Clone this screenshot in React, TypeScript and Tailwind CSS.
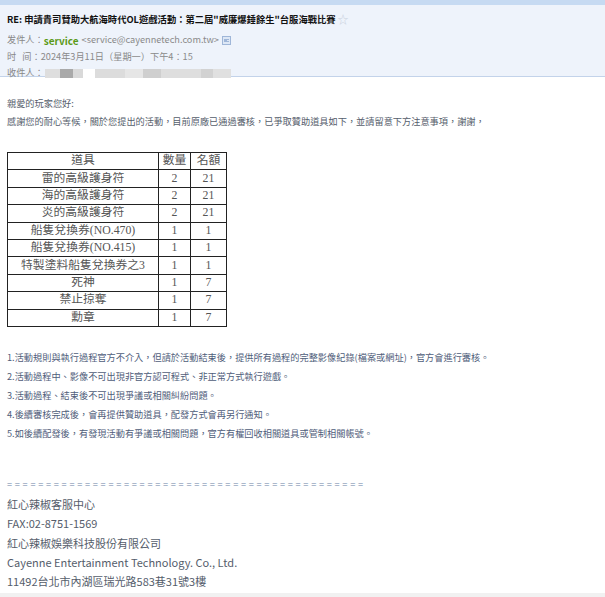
import React from 'react';

const font = { fontFamily: '"Noto Sans CJK TC", "Noto Sans", sans-serif' };

const rows: [string, string, string][] = [
  ['雷的高級護身符', '2', '21'],
  ['海的高級護身符', '2', '21'],
  ['炎的高級護身符', '2', '21'],
  ['船隻兌換券(NO.470)', '1', '1'],
  ['船隻兌換券(NO.415)', '1', '1'],
  ['特製塗料船隻兌換券之3', '1', '1'],
  ['死神', '1', '7'],
  ['禁止掠奪', '1', '7'],
  ['勳章', '1', '7'],
];

const notes = [
  '1.活動規則與執行過程官方不介入，但請於活動結束後，提供所有過程的完整影像紀錄(檔案或網址)，官方會進行審核。',
  '2.活動過程中、影像不可出現非官方認可程式、非正常方式執行遊戲。',
  '3.活動過程、結束後不可出現爭議或相關糾紛問題。',
  '4.後續審核完成後，會再提供贊助道具，配發方式會再另行通知。',
  '5.如後續配發後，有發現活動有爭議或相關問題，官方有權回收相關道具或管制相關帳號。',
];

const signature = [
  '紅心辣椒客服中心',
  'FAX:02-8751-1569',
  '紅心辣椒娛樂科技股份有限公司',
  'Cayenne Entertainment Technology. Co., Ltd.',
  '11492台北市內湖區瑞光路583巷31號3樓',
];

function Header() {
  return (
    <div className="border-t-[5px] border-[#c6daf2] bg-[#eef3fb] border-b border-b-[#c3d3ea] px-[7px] pt-[6px] h-[77px]">
      <div className="flex items-center h-[17px] text-[9.3px] font-bold text-[#111]">
        <span>RE: 申請貴司贊助大航海時代OL遊戲活動：第二屆"威廉爆錘餘生"台服海戰比賽</span>
        <span className="ml-[2px] text-[#c8d0dc] font-normal text-[11px]">☆</span>
      </div>
      <div className="mt-[4px] flex items-center h-[16.5px] text-[9.2px] text-[#888]">
        <span>发件人：</span>
        <span className="text-[#5b9a17] font-bold text-[10px]">service</span>
        <span className="ml-[3px] text-[#8a8a8a]">&lt;service@cayennetech.com.tw&gt;</span>
        <span className="ml-[3px] inline-block w-[9px] h-[9px] border border-[#9fb6d8] bg-[#dde7f5] relative">
          <span className="absolute left-[1px] top-[2px] w-[3px] h-[3px] bg-[#9fb6d8]" />
          <span className="absolute right-[1px] top-[2px] w-[2px] h-[1px] bg-[#9fb6d8]" />
          <span className="absolute right-[1px] top-[4px] w-[2px] h-[1px] bg-[#9fb6d8]" />
        </span>
      </div>
      <div className="flex items-center h-[16.5px] text-[9.2px] text-[#888]">
        <span>时&nbsp;&nbsp;&nbsp;间：</span>
        <span className="text-[#8a8a8a]">2024年3月11日（星期一）下午4：15</span>
      </div>
      <div className="flex items-center h-[16.5px] text-[9.2px] text-[#888]">
        <span>收件人：</span>
        <span className="ml-[1px] flex items-center h-[9px]">
          <span className="w-[15px] h-[9px] bg-[#dedede]" />
          <span className="w-[13px] h-[9px] bg-[#a9a9a9]" />
          <span className="w-[10px] h-[9px] bg-[#d9d9d9]" />
          <span className="w-[12px] h-[9px] bg-white" />
          <span className="w-[30px] h-[9px] bg-[#dcdcdc]" />
          <span className="w-[18px] h-[9px] bg-[#e6e6e6]" />
          <span className="w-[18px] h-[9px] bg-[#cfcfcf]" />
          <span className="w-[40px] h-[9px] bg-[#dedede]" />
          <span className="w-[12px] h-[9px] bg-[#d2d2d2]" />
          <span className="w-[18px] h-[9px] bg-[#e0e0e0]" />
        </span>
      </div>
    </div>
  );
}

function ItemTable() {
  const cell = 'border border-[#222] text-center h-[17.4px] p-0 leading-none';
  return (
    <table
      className="border-collapse text-[11.8px] text-[#555]"
      style={{ fontFamily: '"Liberation Serif", "Noto Sans CJK TC", serif' }}
    >
      <tbody>
        <tr>
          <td className={`${cell} w-[151px]`}>道具</td>
          <td className={`${cell} w-[32px]`}>數量</td>
          <td className={`${cell} w-[36px]`}>名額</td>
        </tr>
        {rows.map((r) => (
          <tr key={r[0]}>
            <td className={cell}>{r[0]}</td>
            <td className={cell}>{r[1]}</td>
            <td className={cell}>{r[2]}</td>
          </tr>
        ))}
      </tbody>
    </table>
  );
}

export default function App() {
  return (
    <div className="w-[605px] h-[597px] bg-white overflow-hidden flex flex-col" style={font}>
      <Header />
      <div className="flex-1 px-[7px] pt-[18px] text-[9.2px] text-[#555d6b]">
        <div className="h-[18px] flex items-center">親愛的玩家您好:</div>
        <div className="h-[18px] flex items-center">
          感謝您的耐心等候，關於您提出的活動，目前原廠已通過審核，已爭取贊助道具如下，並請留意下方注意事項，謝謝，
        </div>
        <div className="mt-[21px]">
          <ItemTable />
        </div>
        <div className="mt-[22px] text-[#4f5d7a]">
          {notes.map((n) => (
            <div key={n} className="h-[18.8px] flex items-center">{n}</div>
          ))}
        </div>
        <div className="mt-[33px] text-[11px] text-[#555d6b]">
          <div className="h-[19px] flex items-center tracking-[2.7px] text-[9.2px] text-[#6a7fa6]">
            ==============================================
          </div>
          {signature.map((s) => (
            <div key={s} className="h-[19.2px] flex items-center">{s}</div>
          ))}
        </div>
      </div>
      <div className="h-[4px] bg-[#f1f1f1]" />
    </div>
  );
}
